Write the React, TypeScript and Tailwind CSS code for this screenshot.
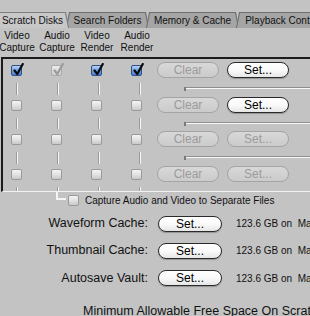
import React from "react";

type CheckState = "on" | "dim" | "off";

function Check({ state }: { state: CheckState }) {
  const box =
    state === "on"
      ? "border-[#2c4f86] bg-gradient-to-b from-[#b9d4f4] via-[#6d9ee0] to-[#4a7fd0]"
      : state === "dim"
        ? "border-[#a9a9a9] bg-gradient-to-b from-[#ececec] to-[#cfcfcf]"
        : "border-[#9a9a9a] bg-gradient-to-b from-[#f4f4f4] via-[#e2e2e2] to-[#c9c9c9]";
  return (
    <div className={`relative w-[11px] h-[11px] shrink-0 rounded-[2px] border ${box}`}>
      {state !== "off" && (
        <svg
          className="absolute left-[1px] top-[-3px]"
          width="11"
          height="13"
          viewBox="0 0 11 13"
        >
          <path
            d="M1.5 7.5 L4.3 11 L9.8 1"
            fill="none"
            stroke={state === "on" ? "#0a0a0a" : "#9b9b9b"}
            strokeWidth="2.2"
            strokeLinecap="round"
            strokeLinejoin="round"
          />
        </svg>
      )}
    </div>
  );
}

function Pill({
  label,
  enabled,
  w = "w-[62px]",
}: {
  label: string;
  enabled: boolean;
  w?: string;
}) {
  return (
    <div
      className={`${w} h-[16px] shrink-0 rounded-full border flex items-center justify-center text-[12px] leading-none ${
        enabled
          ? "border-[#2a2a2a] bg-gradient-to-b from-white via-[#fafafa] to-[#e6e6e6] text-black shadow-[0_1px_1px_rgba(0,0,0,0.25)]"
          : "border-[#a4a4a4] bg-gradient-to-b from-[#d8d8d8] to-[#cbcbcb] text-[#9c9c9c]"
      }`}
    >
      {label}
    </div>
  );
}

const rows: { checks: CheckState[]; clear: boolean; set: boolean; h: string; tail: string }[] = [
  { checks: ["on", "dim", "on", "on"], clear: false, set: true, h: "h-[35px]", tail: "h-[15px]" },
  { checks: ["off", "off", "off", "off"], clear: false, set: true, h: "h-[34px]", tail: "h-[14px]" },
  { checks: ["off", "off", "off", "off"], clear: false, set: false, h: "h-[35px]", tail: "h-[15px]" },
  { checks: ["off", "off", "off", "off"], clear: false, set: false, h: "h-[27px]", tail: "h-[7px]" },
];

const tabs = [
  { label: "Scratch Disks", w: "w-[73px]", on: true },
  { label: "Search Folders", w: "w-[83px]", on: false },
  { label: "Memory & Cache", w: "w-[93px]", on: false },
  { label: "Playback Control", w: "w-[94px]", on: false },
];

const heads = [
  ["Video", "Capture"],
  ["Audio", "Capture"],
  ["Video", "Render"],
  ["Audio", "Render"],
];

const caches = ["Waveform Cache:", "Thumbnail Cache:", "Autosave Vault:"];

export default function App() {
  return (
    <div className="w-[310px] h-[316px] overflow-hidden bg-[#c3c3c3] font-['Liberation_Sans',Arial,sans-serif] text-[#111]">
      {/* tabs */}
      <div className="pt-[12px] flex">
        {tabs.map((t, i) => (
          <div
            key={t.label}
            className={`${t.w} h-[16px] shrink-0 ${i === 0 ? "-ml-[4px]" : "-ml-[3px]"} ${
              t.on ? "bg-[#7d7d7d] z-10" : "bg-[#6e6e6e]"
            } [clip-path:polygon(3px_0,calc(100%-3px)_0,100%_100%,0_100%)]`}
          >
            <div
              className={`mx-[1px] mt-[1px] h-[15px] flex items-center justify-center text-[10px] leading-none whitespace-nowrap [clip-path:polygon(3px_0,calc(100%-3px)_0,100%_100%,0_100%)] ${
                t.on ? "bg-[#c8c8c8]" : "bg-[#a5a5a5]"
              }`}
            >
              {t.label}
            </div>
          </div>
        ))}
      </div>

      {/* column headers */}
      <div className="flex ml-[-3px] pt-[2px] h-[29px]">
        {heads.map((h, i) => (
          <div key={i} className="w-[40px] text-center text-[10px] leading-[12px]">
            <div>{h[0]}</div>
            <div>{h[1]}</div>
          </div>
        ))}
      </div>

      {/* scratch disk box */}
      <div className="ml-[1px] w-[340px] border-t-2 border-l-2 border-[#1c1c1c] border-b border-b-[#f2f2f2] pt-[1px] overflow-hidden">
        {rows.map((r, ri) => (
          <div key={ri} className={`${r.h} flex flex-col`}>
            <div className="h-[20px] flex items-center shrink-0">
              <div className="flex items-center gap-[29px] pl-[8px]">
                {r.checks.map((c, ci) => (
                  <Check key={ci} state={c} />
                ))}
              </div>
              <div className="ml-[15px] flex gap-[8px]">
                <Pill label="Clear" enabled={r.clear} />
                <Pill label="Set..." enabled={r.set} />
              </div>
            </div>
            <div className={`${r.tail} flex items-start overflow-hidden`}>
              <div className="flex gap-[39px] pl-[13px]">
                {[0, 1, 2, 3].map((k) => (
                  <div
                    key={k}
                    className="w-[2px] h-[12px] mt-[3px] border-l border-l-[#9a9a9a] bg-[#f6f6f6]"
                  />
                ))}
              </div>
              {ri < 3 && (
                <div className="ml-[43px] mt-[7px] flex-1 flex items-start">
                  <div className="w-[2px] h-[4px] bg-[#7a7a7a]" />
                  <div className="flex-1 h-[2px] border-t border-t-[#8e8e8e] bg-[#f8f8f8]" />
                </div>
              )}
            </div>
          </div>
        ))}
      </div>

      {/* separate files option */}
      <div className="h-[18px] flex items-start pl-[56px]">
        <div className="w-[10px] h-[8px] border-l-2 border-b-2 border-l-[#f4f4f4] border-b-[#f4f4f4]" />
        <div className="mt-[3px] ml-[2px]">
          <Check state="off" />
        </div>
        <span className="ml-[6px] mt-[3px] text-[10px] leading-[11px]">
          Capture Audio and Video to Separate Files
        </span>
      </div>

      {/* caches */}
      {caches.map((c, i) => (
        <div
          key={c}
          className={`${i === 2 ? "h-[28px]" : "h-[27px]"} flex items-center whitespace-nowrap`}
        >
          <div className="w-[148px] shrink-0 text-right text-[12.5px]">{c}</div>
          <div className="ml-[10px]">
            <Pill label="Set..." enabled w="w-[64px]" />
          </div>
          <div className="ml-[14px] text-[10px]">123.6 GB on&nbsp; Macintosh HD</div>
        </div>
      ))}

      <div className="h-[38px] flex items-center pl-[83px] whitespace-nowrap text-[12.5px]">
        Minimum Allowable Free Space On Scratch Disks:
      </div>
    </div>
  );
}
